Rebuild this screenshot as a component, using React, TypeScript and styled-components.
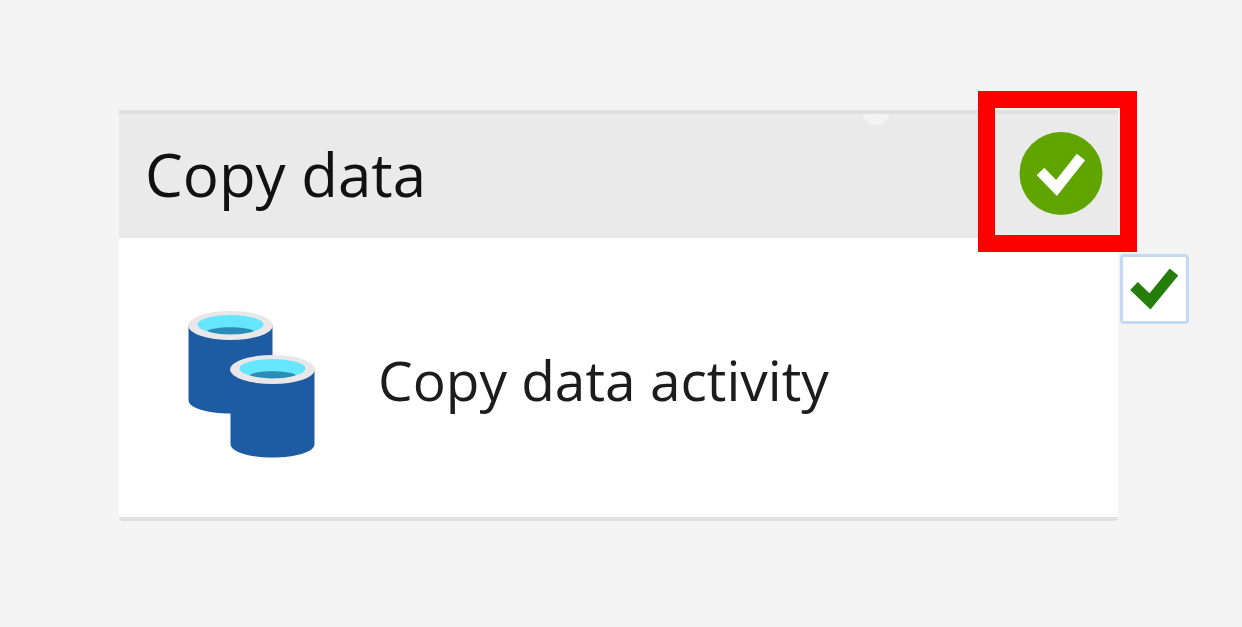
import React from 'react';
import styled, { createGlobalStyle } from 'styled-components';

const GlobalStyle = createGlobalStyle`
  *, *::before, *::after { box-sizing: border-box; }
  body {
    margin: 0;
    background: #f4f4f4;
    color: #111;
    font-family: "Open Sans", "Noto Sans", sans-serif;
  }
`;

const Canvas = styled.main`
  padding: 110px 124px 104px 119px;
`;

const Card = styled.article`
  position: relative;
  background: #fff;
  border-bottom: 4px solid #e0e0e0;
  border-radius: 0 0 4px 4px;
`;

const CardHeader = styled.header`
  position: relative;
  display: flex;
  align-items: center;
  justify-content: space-between;
  height: 128px;
  padding: 0 15px 4px 26px;
  background: #eaeaea;
  border-top: 4px solid #e0e0e0;
`;

const Title = styled.h1`
  margin: 0;
  font-size: 60px;
  line-height: 76px;
  font-weight: 400;
`;

const StatusIcon = styled.svg`
  display: block;
  width: 84px;
  height: 84px;
`;

const InputPort = styled.span`
  position: absolute;
  top: 0;
  right: 229px;
  width: 26px;
  height: 11px;
  border-radius: 0 0 13px 13px / 0 0 11px 11px;
  background: #f4f4f4;
`;

const CardBody = styled.div`
  display: flex;
  align-items: center;
  gap: 62px;
  height: 279px;
  padding: 14px 69px 0;
`;

const DatabaseIcon = styled.svg`
  display: block;
  flex: none;
  width: 128px;
  height: 150px;
`;

const ActivityName = styled.p`
  margin: 0;
  padding-bottom: 10px;
  color: #1c1c1c;
  font-size: 55px;
  line-height: 72px;
  font-weight: 400;
  white-space: nowrap;
`;

const Highlight = styled.div`
  position: absolute;
  top: -19px;
  right: -19px;
  width: 159px;
  height: 161px;
  border: 17px solid #f00;
  pointer-events: none;
`;

const SuccessPort = styled.button`
  position: absolute;
  top: 144px;
  right: -71px;
  display: flex;
  align-items: center;
  justify-content: center;
  width: 69px;
  height: 70px;
  padding: 0;
  background: #fff;
  border: 3px solid #c5d9f3;
  border-radius: 4px;
`;

const PortIcon = styled.svg`
  display: block;
  flex: none;
  width: 63px;
  height: 64px;
`;

interface CylinderProps {
  x: number;
  y: number;
}

function Cylinder({ x, y }: CylinderProps) {
  return (
    <g transform={`translate(${x} ${y})`}>
      <path d="M0.500 15V89C0.500 97 19 102.500 42.500 102.500S84.500 97 84.500 89V15Z" fill="#1d5ba3" />
      <ellipse cx="42.500" cy="14.500" rx="42.500" ry="14.500" fill="#e9e7e7" />
      <ellipse cx="42.500" cy="13.500" rx="33" ry="9.500" fill="#67e6ff" />
      <path d="M19 20C27 15 58 15 66 20C56 24.500 29 24.500 19 20Z" fill="#2b8db5" />
    </g>
  );
}

export default function App() {
  return (
    <>
      <GlobalStyle />
      <Canvas>
        <Card>
          <CardHeader>
            <Title>Copy data</Title>
            <InputPort />
            <StatusIcon viewBox="0 0 84 84" role="img" aria-label="Succeeded">
              <circle cx="42" cy="41.500" r="41.500" fill="#60a400" />
              <path d="M21.500 39.500L37.500 56L62 25" fill="none" stroke="#fff" strokeWidth="10.500" />
            </StatusIcon>
          </CardHeader>
          <CardBody>
            <DatabaseIcon viewBox="0 0 128 150" aria-hidden="true">
              <Cylinder x={0} y={1} />
              <Cylinder x={42} y={45} />
            </DatabaseIcon>
            <ActivityName>Copy data activity</ActivityName>
          </CardBody>
          <SuccessPort type="button" aria-label="On success">
            <PortIcon viewBox="0 0 63 64" aria-hidden="true">
              <path d="M11 29L27 44.500L51 15" fill="none" stroke="#257d0b" strokeWidth="11" />
            </PortIcon>
          </SuccessPort>
          <Highlight />
        </Card>
      </Canvas>
    </>
  );
}
